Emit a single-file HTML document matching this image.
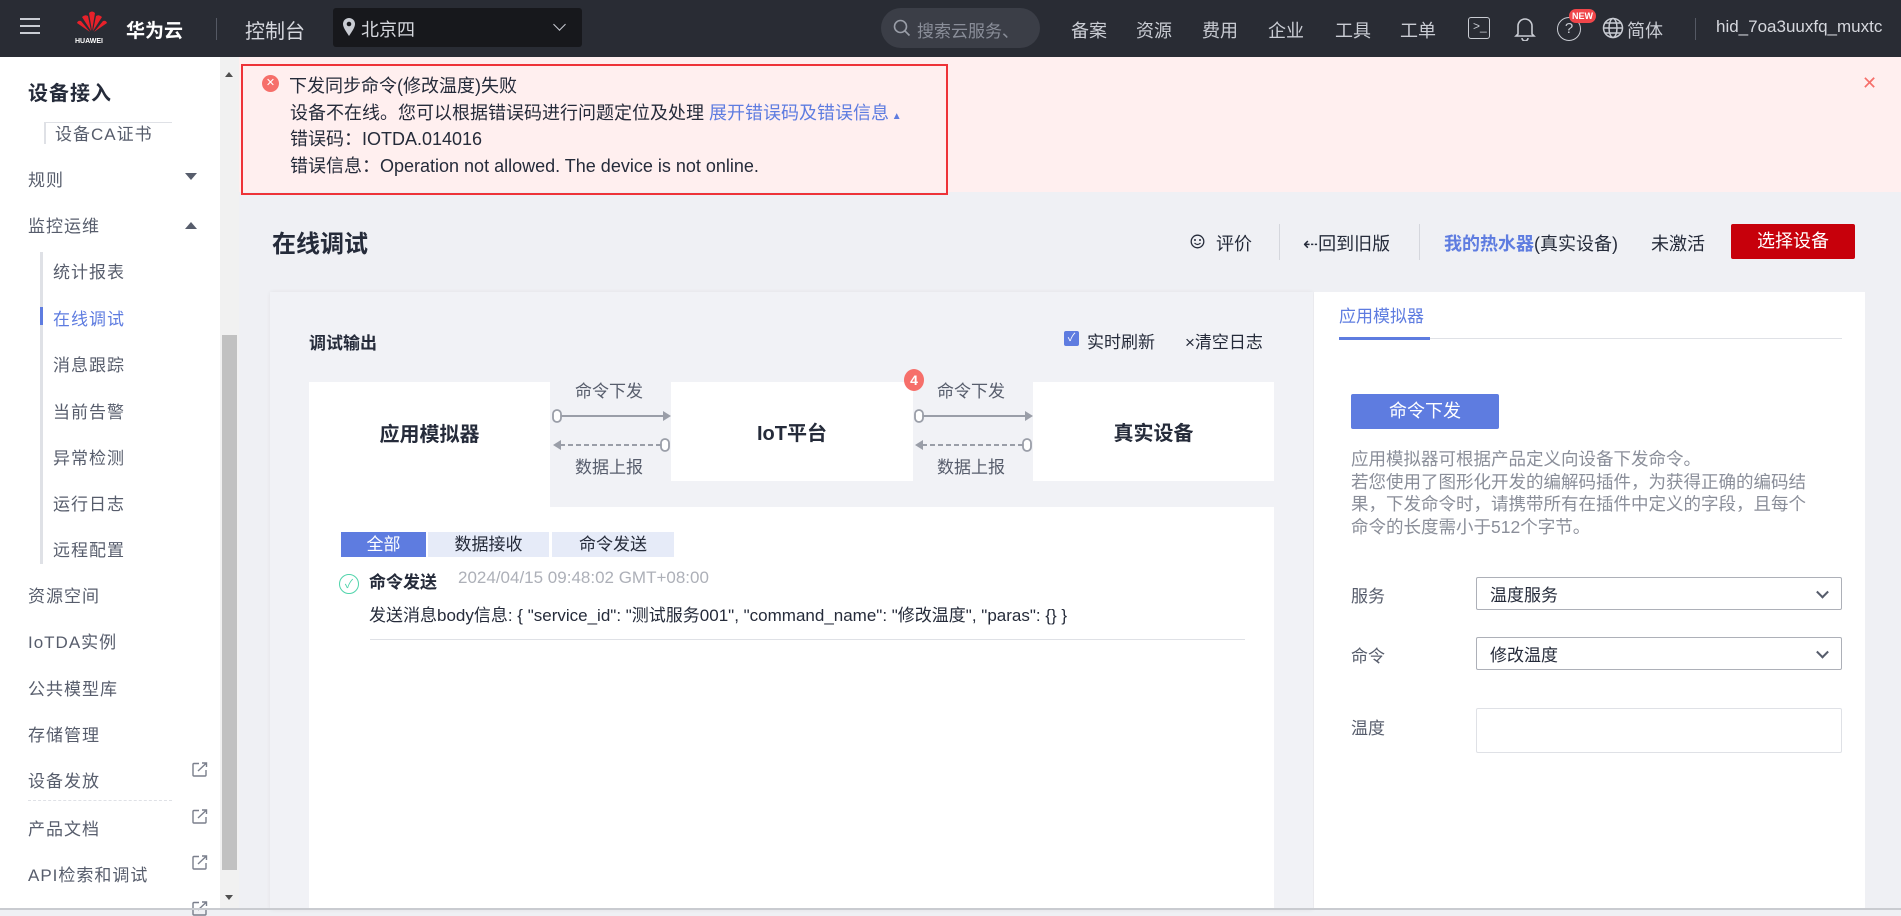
<!DOCTYPE html>
<html><head><meta charset="utf-8"><style>
*{margin:0;padding:0;box-sizing:border-box}
body{width:1901px;height:910px;overflow:hidden;background:#eff0f4;font-family:"Liberation Sans","Noto Sans CJK SC",sans-serif;color:#252b3a;position:relative}
.a{position:absolute;white-space:nowrap}
.hd{position:absolute;left:0;top:0;width:1901px;height:57px;background:#292c34}
.nv{position:absolute;top:17px;font-size:18px;color:#c9ccd3}
.sb{position:absolute;left:0;top:57px;width:220px;height:853px;background:#fff}
.si{position:absolute;font-size:17px;color:#575d6c;letter-spacing:1px}
.ss{position:absolute;left:53px;font-size:17px;color:#575d6c;letter-spacing:1px}
.ext{position:absolute;left:192px}
.fb{position:absolute;background:#fff;font-size:20px;font-weight:bold;display:flex;align-items:center;justify-content:center}
.lb{position:absolute;font-size:17px;color:#575d6c}
.sel{position:absolute;left:1476px;width:366px;border:1px solid #adb0b8;border-radius:2px;background:#fff;font-size:17px;padding-left:13px;display:flex;align-items:center}
.chev{position:absolute;right:14px;top:50%;width:9px;height:9px;border-right:2px solid #575d6c;border-bottom:2px solid #575d6c;transform:translateY(-70%) rotate(45deg)}
</style></head><body>

<div class="hd">
  <div class="a" style="left:20px;top:18px;width:20px;height:2px;background:#c9ccd3;box-shadow:0 7px 0 #c9ccd3,0 14px 0 #c9ccd3"></div>
  <svg class="a" style="left:76px;top:9px" width="32" height="30" viewBox="0 0 32 30">
    <g fill="#e8212a">
      <path d="M16 22 L13 4 Q16 1 19 4 Z"/>
      <path d="M15 22 L6 8 Q9 5 12 7 Z"/>
      <path d="M17 22 L26 8 Q23 5 20 7 Z"/>
      <path d="M14 23 L1 14 Q2 11 5 12 Z"/>
      <path d="M18 23 L31 14 Q30 11 27 12 Z"/>
    </g>
  </svg>
  <div class="a" style="left:75px;top:38px;font-size:7px;font-weight:bold;color:#fff">HUAWEI</div>
  <div class="a" style="left:126px;top:16px;font-size:19px;font-weight:bold;color:#fff">华为云</div>
  <div class="a" style="left:216px;top:18px;width:1px;height:22px;background:#555964"></div>
  <div class="a" style="left:245px;top:15px;font-size:20px;color:#d6d8de">控制台</div>
  <div class="a" style="left:333px;top:8px;width:249px;height:39px;background:#17181c;border-radius:3px"></div>
  <svg class="a" style="left:342px;top:17px" width="14" height="20" viewBox="0 0 14 20"><path d="M7 19 C3 13 1 10 1 7 A6 6 0 0 1 13 7 C13 10 11 13 7 19Z" fill="#c9ccd3"/><circle cx="7" cy="7" r="2.3" fill="#17181c"/></svg>
  <div class="a" style="left:361px;top:16px;font-size:18px;color:#d6d8de">北京四</div>
  <div class="a" style="left:555px;top:20px;width:9px;height:9px;border-right:1.5px solid #c9ccd3;border-bottom:1.5px solid #c9ccd3;transform:rotate(45deg)"></div>
  <div class="a" style="left:881px;top:8px;width:159px;height:40px;background:#3b3e47;border-radius:20px;overflow:hidden">
    <svg class="a" style="left:12px;top:11px" width="18" height="18" viewBox="0 0 18 18"><circle cx="7.5" cy="7.5" r="6" stroke="#9a9ea8" stroke-width="1.6" fill="none"/><path d="M12 12 L16.5 16.5" stroke="#9a9ea8" stroke-width="1.6"/></svg>
    <div class="a" style="left:36px;top:9px;font-size:17px;color:#8a8e99">搜索云服务、</div>
  </div>
  <div class="nv" style="left:1071px">备案</div>
  <div class="nv" style="left:1136px">资源</div>
  <div class="nv" style="left:1202px">费用</div>
  <div class="nv" style="left:1268px">企业</div>
  <div class="nv" style="left:1335px">工具</div>
  <div class="nv" style="left:1400px">工单</div>
  <div class="a" style="left:1468px;top:17px;width:22px;height:22px;border:1.6px solid #c9ccd3;border-radius:3px;font-size:12px;color:#c9ccd3;line-height:17px;padding-left:4px">&gt;_</div>
  <svg class="a" style="left:1514px;top:15px" width="22" height="26" viewBox="0 0 22 26"><path d="M4 19 V11 A7 7 0 0 1 18 11 V19 L20 21 H2 Z" fill="none" stroke="#c9ccd3" stroke-width="1.6"/><path d="M8 23 A3 3 0 0 0 14 23" fill="none" stroke="#c9ccd3" stroke-width="1.6"/></svg>
  <div class="a" style="left:1557px;top:17px;width:24px;height:24px;border:1.6px solid #c9ccd3;border-radius:50%;font-size:15px;color:#c9ccd3;text-align:center;line-height:21px">?</div>
  <div class="a" style="left:1569px;top:9px;width:27px;height:14px;background:#f0464a;border-radius:7px;font-size:9px;color:#fff;text-align:center;line-height:14px;font-weight:bold">NEW</div>
  <svg class="a" style="left:1602px;top:17px" width="22" height="22" viewBox="0 0 22 22"><g fill="none" stroke="#c9ccd3" stroke-width="1.5"><circle cx="11" cy="11" r="9.5"/><ellipse cx="11" cy="11" rx="4" ry="9.5"/><path d="M1.5 11 H20.5 M3 6 H19 M3 16 H19"/></g></svg>
  <div class="nv" style="left:1627px">简体</div>
  <div class="a" style="left:1695px;top:18px;width:1px;height:22px;background:#555964"></div>
  <div class="a" style="left:1716px;top:17px;font-size:17px;color:#d6d8de">hid_7oa3uuxfq_muxtc</div>
</div>

<div class="sb">
  <div class="si" style="left:28px;top:20px;font-size:20px;font-weight:bold;color:#252b3a">设备接入</div>
  <div class="a" style="left:44px;top:65px;width:128px;height:1px;background:#dfe1e6"></div>
  <div class="a" style="left:44px;top:65px;width:2px;height:22px;background:#dfe1e6"></div>
  <div class="si" style="left:55px;top:63px">设备CA证书</div>
  <div class="si" style="left:28px;top:109px">规则</div>
  <div class="a" style="left:185px;top:116px;border:6px solid transparent;border-top:7px solid #575d6c"></div>
  <div class="si" style="left:28px;top:155px">监控运维</div>
  <div class="a" style="left:185px;top:159px;border:6px solid transparent;border-bottom:7px solid #575d6c"></div>
  <div class="a" style="left:40px;top:195px;width:3px;height:312px;background:#dfe1e6"></div>
  <div class="a" style="left:40px;top:250px;width:3px;height:18px;background:#5e7ce0"></div>
  <div class="ss" style="top:201px">统计报表</div>
  <div class="ss" style="top:248px;color:#5e7ce0">在线调试</div>
  <div class="ss" style="top:294px">消息跟踪</div>
  <div class="ss" style="top:341px">当前告警</div>
  <div class="ss" style="top:387px">异常检测</div>
  <div class="ss" style="top:433px">运行日志</div>
  <div class="ss" style="top:479px">远程配置</div>
  <div class="si" style="left:28px;top:525px">资源空间</div>
  <div class="si" style="left:28px;top:571px">IoTDA实例</div>
  <div class="si" style="left:28px;top:618px">公共模型库</div>
  <div class="si" style="left:28px;top:664px">存储管理</div>
  <div class="si" style="left:28px;top:710px">设备发放</div>
  <svg class="ext" style="top:705px" width="16" height="15" viewBox="0 0 16 15"><path d="M7 1.5 H2 Q1 1.5 1 2.5 V13 Q1 14 2 14 H13 Q14 14 14 13 V8" fill="none" stroke="#7a7f8c" stroke-width="1.4"/><path d="M6 9 L14.5 1 M10 1 H14.5 V5" fill="none" stroke="#7a7f8c" stroke-width="1.4"/></svg>
  <div class="a" style="left:28px;top:743px;width:144px;border-top:1px dashed #dfe1e6"></div>
  <div class="si" style="left:28px;top:758px">产品文档</div>
  <svg class="ext" style="top:752px" width="16" height="15" viewBox="0 0 16 15"><path d="M7 1.5 H2 Q1 1.5 1 2.5 V13 Q1 14 2 14 H13 Q14 14 14 13 V8" fill="none" stroke="#7a7f8c" stroke-width="1.4"/><path d="M6 9 L14.5 1 M10 1 H14.5 V5" fill="none" stroke="#7a7f8c" stroke-width="1.4"/></svg>
  <div class="si" style="left:28px;top:804px">API检索和调试</div>
  <svg class="ext" style="top:798px" width="16" height="15" viewBox="0 0 16 15"><path d="M7 1.5 H2 Q1 1.5 1 2.5 V13 Q1 14 2 14 H13 Q14 14 14 13 V8" fill="none" stroke="#7a7f8c" stroke-width="1.4"/><path d="M6 9 L14.5 1 M10 1 H14.5 V5" fill="none" stroke="#7a7f8c" stroke-width="1.4"/></svg>
  <svg class="ext" style="top:844px" width="16" height="15" viewBox="0 0 16 15"><path d="M7 1.5 H2 Q1 1.5 1 2.5 V13 Q1 14 2 14 H13 Q14 14 14 13 V8" fill="none" stroke="#7a7f8c" stroke-width="1.4"/><path d="M6 9 L14.5 1 M10 1 H14.5 V5" fill="none" stroke="#7a7f8c" stroke-width="1.4"/></svg>
</div>
<div class="a" style="left:220px;top:57px;width:19px;height:853px;background:#f1f1f1"></div>
<div class="a" style="left:222px;top:335px;width:15px;height:535px;background:#c1c1c1"></div>
<div class="a" style="left:225px;top:68px;border:4px solid transparent;border-bottom:5px solid #505050"></div>
<div class="a" style="left:225px;top:895px;border:4px solid transparent;border-top:5px solid #505050"></div>

<div class="a" style="left:239px;top:57px;width:1662px;height:135px;background:#ffefef"></div>
<div class="a" style="left:241px;top:64px;width:707px;height:131px;border:2px solid #ee3338"></div>
<div class="a" style="left:262px;top:75px;width:17px;height:17px;border-radius:50%;background:#f66f6a;color:#fff;font-size:11px;text-align:center;line-height:17px">✕</div>
<div class="a" style="left:289px;top:72px;font-size:18px">下发同步命令(修改温度)失败</div>
<div class="a" style="left:290px;top:99px;font-size:18px">设备不在线。您可以根据错误码进行问题定位及处理 <span style="color:#5e7ce0">展开错误码及错误信息</span><span style="color:#5e7ce0;font-size:10px"> ▲</span></div>
<div class="a" style="left:290px;top:125px;font-size:18px">错误码：IOTDA.014016</div>
<div class="a" style="left:290px;top:152px;font-size:18px">错误信息：Operation not allowed. The device is not online.</div>
<div class="a" style="left:1862px;top:73px;font-size:18px;color:#f66f6a">✕</div>

<div class="a" style="left:272px;top:224px;font-size:24px;font-weight:bold">在线调试</div>
<svg class="a" style="left:1190px;top:234px" width="15" height="15" viewBox="0 0 15 15"><circle cx="7.5" cy="7.5" r="6.3" fill="none" stroke="#252b3a" stroke-width="1.3"/><circle cx="5" cy="6" r="1" fill="#252b3a"/><circle cx="10" cy="6" r="1" fill="#252b3a"/><path d="M4.5 9 Q7.5 12 10.5 9" fill="none" stroke="#252b3a" stroke-width="1.2"/></svg>
<div class="a" style="left:1216px;top:230px;font-size:18px">评价</div>
<div class="a" style="left:1279px;top:224px;width:1px;height:36px;background:#d5d7dd"></div>
<div class="a" style="left:1303px;top:230px;font-size:18px">⇠回到旧版</div>
<div class="a" style="left:1419px;top:224px;width:1px;height:36px;background:#d5d7dd"></div>
<div class="a" style="left:1444px;top:230px;font-size:18px"><b style="color:#5e7ce0">我的热水器</b>(真实设备)</div>
<div class="a" style="left:1651px;top:230px;font-size:18px">未激活</div>
<div class="a" style="left:1731px;top:224px;width:124px;height:35px;background:#c7000b;border-radius:2px;color:#fff;font-size:18px;text-align:center;line-height:35px">选择设备</div>

<div class="a" style="left:270px;top:292px;width:1043px;height:618px;background:#f1f2f6;box-shadow:0 0 4px rgba(0,0,0,.06)"></div>
<div class="a" style="left:309px;top:329px;font-size:17px;font-weight:bold">调试输出</div>
<div class="a" style="left:1064px;top:331px;width:15px;height:15px;background:#5e7ce0;border-radius:2px;color:#fff;font-size:11px;text-align:center;line-height:15px">✓</div>
<div class="a" style="left:1087px;top:328px;font-size:17px">实时刷新</div>
<div class="a" style="left:1185px;top:328px;font-size:17px">×清空日志</div>

<div class="fb" style="left:309px;top:382px;width:241px;height:126px;padding-bottom:26px">应用模拟器</div>
<div class="fb" style="left:671px;top:382px;width:242px;height:99px">IoT平台</div>
<div class="fb" style="left:1033px;top:382px;width:241px;height:99px">真实设备</div>
<svg class="a" style="left:550px;top:378px" width="484" height="100" viewBox="0 0 484 100">
  <g font-family="Liberation Sans, Noto Sans CJK SC, sans-serif" font-size="17" fill="#575d6c">
    <text x="25" y="19">命令下发</text><text x="25" y="95">数据上报</text>
    <text x="387" y="19">命令下发</text><text x="387" y="95">数据上报</text>
  </g>
  <g stroke="#9a9ea8" stroke-width="2" fill="none">
    <path d="M10 38 H118"/><path d="M10 67 H112" stroke-dasharray="5 3"/>
    <path d="M372 38 H480"/><path d="M372 67 H474" stroke-dasharray="5 3"/>
  </g>
  <g fill="#9a9ea8">
    <path d="M121 38 L113 33 L113 43Z"/><path d="M3 67 L11 62 L11 72Z"/>
    <path d="M483 38 L475 33 L475 43Z"/><path d="M365 67 L373 62 L373 72Z"/>
  </g>
  <g fill="#fff" stroke="#9a9ea8" stroke-width="1.8">
    <rect x="3" y="32" width="8" height="12" rx="4"/><rect x="111" y="61" width="8" height="12" rx="4"/>
    <rect x="365" y="32" width="8" height="12" rx="4"/><rect x="473" y="61" width="8" height="12" rx="4"/>
  </g>
</svg>
<div class="a" style="left:904px;top:369px;width:20px;height:22px;border-radius:50%;background:#f66f6a;color:#fff;font-size:14px;font-weight:bold;text-align:center;line-height:22px">4</div>

<div class="a" style="left:309px;top:507px;width:965px;height:403px;background:#fff"></div>
<div class="a" style="left:341px;top:532px;width:85px;height:25px;background:#5e7ce0;color:#fff;font-size:17px;text-align:center;line-height:25px">全部</div>
<div class="a" style="left:428px;top:532px;width:121px;height:25px;background:#e6ebf8;font-size:17px;text-align:center;line-height:25px">数据接收</div>
<div class="a" style="left:552px;top:532px;width:122px;height:25px;background:#e6ebf8;font-size:17px;text-align:center;line-height:25px">命令发送</div>
<div class="a" style="left:339px;top:574px;width:20px;height:20px;border:1.3px solid #50d4ab;border-radius:50%;color:#50d4ab;font-size:12px;text-align:center;line-height:18px">✓</div>
<div class="a" style="left:369px;top:568px;font-size:17px;font-weight:bold">命令发送</div>
<div class="a" style="left:458px;top:568px;font-size:17px;color:#adb0b8">2024/04/15 09:48:02 GMT+08:00</div>
<div class="a" style="left:369px;top:601px;font-size:17px">发送消息body信息: { "service_id": "测试服务001", "command_name": "修改温度", "paras": {} }</div>
<div class="a" style="left:370px;top:639px;width:875px;height:1px;background:#dfe1e6"></div>

<div class="a" style="left:1314px;top:292px;width:551px;height:618px;background:#fff"></div>
<div class="a" style="left:1339px;top:302px;font-size:17px;color:#5e7ce0">应用模拟器</div>
<div class="a" style="left:1339px;top:338px;width:503px;height:1px;background:#dfe1e6"></div>
<div class="a" style="left:1339px;top:337px;width:91px;height:3px;background:#5e7ce0"></div>
<div class="a" style="left:1351px;top:394px;width:148px;height:35px;background:#5e7ce0;border-radius:2px;color:#fff;font-size:18px;text-align:center;line-height:35px">命令下发</div>
<div class="a" style="left:1351px;top:448px;font-size:17.5px;line-height:22.5px;color:#8a8e99">应用模拟器可根据产品定义向设备下发命令。<br>若您使用了图形化开发的编解码插件，为获得正确的编码结<br>果，下发命令时，请携带所有在插件中定义的字段，且每个<br>命令的长度需小于512个字节。</div>
<div class="lb" style="left:1351px;top:582px">服务</div>
<div class="sel" style="top:577px;height:33px">温度服务<span class="chev"></span></div>
<div class="lb" style="left:1351px;top:642px">命令</div>
<div class="sel" style="top:637px;height:33px">修改温度<span class="chev"></span></div>
<div class="lb" style="left:1351px;top:714px">温度</div>
<div class="a" style="left:1476px;top:708px;width:366px;height:45px;border:1px solid #dfe1e6;border-radius:2px"></div>
<div class="a" style="left:0;top:908px;width:1901px;height:2px;background:#c9cbd0"></div>
</body></html>
